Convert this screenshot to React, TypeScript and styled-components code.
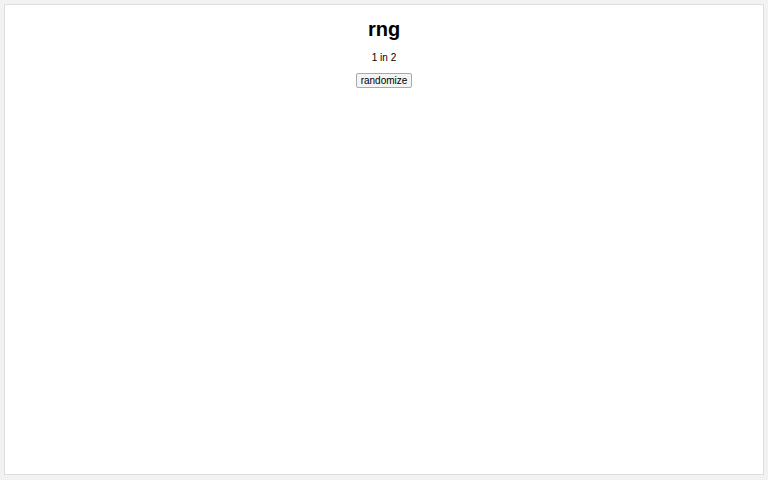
import styled, { createGlobalStyle } from "styled-components";
import { useState } from "react";

const Global = createGlobalStyle`
    html, body {
        margin: 0;
        padding: 0;
        background: #f2f2f2;
    }
    body {
        padding: 4px 4px 0 4px;
        font-family: "Liberation Sans", Arial, sans-serif;
    }
`;

const Panel = styled.div`
    box-sizing: border-box;
    height: 471px;
    background: #fff;
    border: 1px solid #dddddd;
    display: flex;
    flex-direction: column;
    align-items: center;
    padding-top: 12px;
`;

const Title = styled.h1`
    margin: 0;
    font-size: 20px;
    font-weight: bold;
    color: #000;
    line-height: 24px;
`;

const Odds = styled.p`
    margin: 11px 0 0 0;
    font-size: 10px;
    line-height: 12px;
    color: #000;
`;

const Button = styled.button`
    margin-top: 9px;
    font-family: "Liberation Sans", Arial, sans-serif;
    font-size: 10px;
    line-height: 11px;
    padding: 1px 4px;
    background: #f4f4f4;
    border: 1px solid #a9a9a9;
    border-radius: 2px;
    color: #000;
`;

export default function App() {
    const [n, setN] = useState(2);
    return (
        <>
            <Global />
            <Panel>
                <Title>rng</Title>
                <Odds>1 in {n}</Odds>
                <Button onClick={() => setN(2 + Math.floor(Math.random() * 9))}>randomize</Button>
            </Panel>
        </>
    );
}
